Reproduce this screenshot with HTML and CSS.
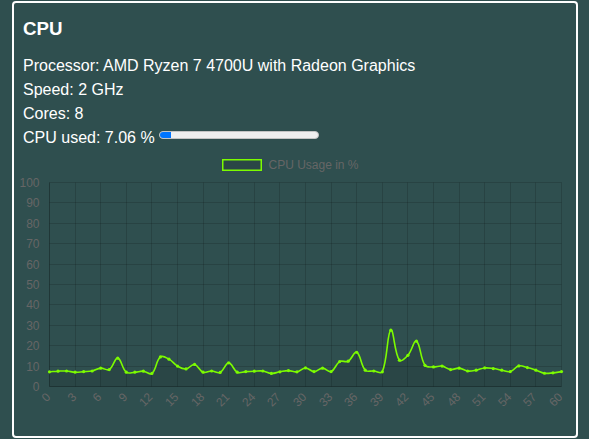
FILE: index.html
```html
<!DOCTYPE html>
<html lang="en">
<head>
<meta charset="utf-8">
<title>CPU</title>
<link rel="stylesheet" href="styles.css">
</head>
<body>
<div class="card">
  <div class="info">
    <h3 class="title">CPU</h3>
    <div class="row">Processor: AMD Ryzen 7 4700U with Radeon Graphics</div>
    <div class="row">Speed: 2 GHz</div>
    <div class="row">Cores: 8</div>
    <div class="row">CPU used: 7.06 %<span class="meter"><span class="meter-fill" style="width:7.06%"></span></span></div>
  </div>
  <svg class="chart" width="562" height="284" viewBox="0 0 562 284">
    <rect class="legend-box" x="208.75" y="9.75" width="38.5" height="10.5"/>
    <text class="legend-text" x="254.5" y="19.3">CPU Usage in %</text>
    <path class="grid" d="M35.5 32.5H547.5M35.5 52.5H547.5M35.5 73.5H547.5M35.5 93.5H547.5M35.5 114.5H547.5M35.5 134.5H547.5M35.5 154.5H547.5M35.5 175.5H547.5M35.5 195.5H547.5M35.5 216.5H547.5M61.5 32.5V236.5M86.5 32.5V236.5M112.5 32.5V236.5M137.5 32.5V236.5M163.5 32.5V236.5M189.5 32.5V236.5M214.5 32.5V236.5M240.5 32.5V236.5M265.5 32.5V236.5M291.5 32.5V236.5M317.5 32.5V236.5M342.5 32.5V236.5M368.5 32.5V236.5M393.5 32.5V236.5M419.5 32.5V236.5M445.5 32.5V236.5M470.5 32.5V236.5M496.5 32.5V236.5M521.5 32.5V236.5M547.5 32.5V236.5"/>
    <path class="axis" d="M35.5 32.5V236.5H547.5"/>
    <g class="y-ticks">
      <text x="25.5" y="36.5">100</text>
      <text x="25.5" y="56.5">90</text>
      <text x="25.5" y="77.5">80</text>
      <text x="25.5" y="97.5">70</text>
      <text x="25.5" y="118.5">60</text>
      <text x="25.5" y="138.5">50</text>
      <text x="25.5" y="158.5">40</text>
      <text x="25.5" y="179.5">30</text>
      <text x="25.5" y="199.5">20</text>
      <text x="25.5" y="220.5">10</text>
      <text x="25.5" y="240.5">0</text>
    </g>
    <g class="x-ticks">
      <text transform="translate(34.5 245) rotate(-45)">0</text>
      <text transform="translate(60.5 245) rotate(-45)">3</text>
      <text transform="translate(85.5 245) rotate(-45)">6</text>
      <text transform="translate(111.5 245) rotate(-45)">9</text>
      <text transform="translate(136.5 245) rotate(-45)">12</text>
      <text transform="translate(162.5 245) rotate(-45)">15</text>
      <text transform="translate(188.5 245) rotate(-45)">18</text>
      <text transform="translate(213.5 245) rotate(-45)">21</text>
      <text transform="translate(239.5 245) rotate(-45)">24</text>
      <text transform="translate(264.5 245) rotate(-45)">27</text>
      <text transform="translate(290.5 245) rotate(-45)">30</text>
      <text transform="translate(316.5 245) rotate(-45)">33</text>
      <text transform="translate(341.5 245) rotate(-45)">36</text>
      <text transform="translate(367.5 245) rotate(-45)">39</text>
      <text transform="translate(392.5 245) rotate(-45)">42</text>
      <text transform="translate(418.5 245) rotate(-45)">45</text>
      <text transform="translate(444.5 245) rotate(-45)">48</text>
      <text transform="translate(469.5 245) rotate(-45)">51</text>
      <text transform="translate(495.5 245) rotate(-45)">54</text>
      <text transform="translate(520.5 245) rotate(-45)">57</text>
      <text transform="translate(546.5 245) rotate(-45)">60</text>
    </g>
    <path id="area" class="area" d=""/>
    <path id="line" class="series" d=""/>
    <g id="points" class="points"></g>
  </svg>
</div>
<script src="script.js"></script>
</body>
</html>
```

FILE: styles.css
```css
html, body {
  margin: 0;
  background: #2f4f4f;
}

body {
  padding: 1px 0 0 12px;
  font-family: "Liberation Sans", Arial, sans-serif;
  color: #ffffff;
}

.card {
  box-sizing: border-box;
  width: 566px;
  height: 437px;
  border: 2px solid #ffffff;
  border-radius: 4px;
  background: #2f4f4f;
  overflow: hidden;
}

.info {
  padding: 15px 9px 0;
}

.title {
  margin: 0 0 14px;
  font-size: 18.72px;
  line-height: 22px;
  font-weight: bold;
}

.row {
  font-size: 16px;
  line-height: 24px;
}

.meter {
  display: inline-block;
  box-sizing: border-box;
  width: 160px;
  height: 8px;
  margin-left: 4px;
  vertical-align: 4.5px;
  background: #efefef;
  border: 1px solid #c4c4c4;
  border-radius: 4px;
  overflow: hidden;
}

.meter-fill {
  display: block;
  height: 100%;
  background: #0075ff;
}

.chart {
  display: block;
  font-family: "Liberation Sans", Arial, sans-serif;
}

.legend-box {
  fill: rgba(0, 0, 0, 0.1);
  stroke: #7cfc00;
  stroke-width: 1.5;
}

.legend-text {
  font-size: 12px;
  fill: #666666;
}

.grid {
  fill: none;
  stroke: rgba(0, 0, 0, 0.15);
  stroke-width: 1;
}

.axis {
  fill: none;
  stroke: rgba(0, 0, 0, 0.3);
  stroke-width: 1;
}

.y-ticks text {
  font-size: 12px;
  fill: #666666;
  text-anchor: end;
}

.x-ticks text {
  font-size: 12px;
  fill: #666666;
  text-anchor: end;
  dominant-baseline: central;
}

.area {
  fill: rgba(0, 0, 0, 0.1);
  stroke: none;
}

.series {
  fill: none;
  stroke: #7cfc00;
  stroke-width: 1.6;
  stroke-linejoin: round;
}

.points circle {
  fill: #7cfc00;
}
```

FILE: script.js
```js
(function () {
  var data = [7.2, 7.5, 7.6, 7.0, 7.3, 7.6, 9.0, 8.3, 13.9, 7.0, 7.0, 7.5, 6.4, 14.5, 13.4, 10.0, 8.6, 10.8, 7.0, 7.6, 6.9, 11.6, 7.0, 7.3, 7.5, 7.6, 6.4, 7.2, 7.8, 7.2, 9.1, 7.3, 9.0, 7.3, 12.2, 12.4, 16.8, 8.0, 7.6, 7.2, 27.6, 12.9, 15.3, 22.2, 10.4, 9.6, 10.0, 8.3, 9.0, 7.6, 8.0, 9.1, 8.8, 8.0, 7.3, 10.1, 9.3, 8.0, 6.5, 6.7, 7.3];
  var left = 35.5, right = 547.5, top = 32.5, bottom = 236.5;
  var step = (right - left) / (data.length - 1);
  var pts = data.map(function (v, i) {
    return { x: left + i * step, y: bottom - v * (bottom - top) / 100 };
  });
  var t = 0.4;
  function clamp(v, a, b) { return Math.min(Math.max(v, a), b); }
  var cps = pts.map(function (p, i) {
    var prev = pts[i - 1] || p, next = pts[i + 1] || p;
    var d01 = Math.hypot(p.x - prev.x, p.y - prev.y);
    var d12 = Math.hypot(next.x - p.x, next.y - p.y);
    var s01 = d01 / (d01 + d12), s12 = d12 / (d01 + d12);
    if (isNaN(s01)) s01 = 0;
    if (isNaN(s12)) s12 = 0;
    var fa = t * s01, fb = t * s12;
    return {
      px: clamp(p.x - fa * (next.x - prev.x), left, right),
      py: clamp(p.y - fa * (next.y - prev.y), top, bottom),
      nx: clamp(p.x + fb * (next.x - prev.x), left, right),
      ny: clamp(p.y + fb * (next.y - prev.y), top, bottom)
    };
  });
  function f(n) { return n.toFixed(2); }
  var d = 'M' + f(pts[0].x) + ' ' + f(pts[0].y);
  for (var i = 1; i < pts.length; i++) {
    d += ' C' + f(cps[i - 1].nx) + ' ' + f(cps[i - 1].ny) + ' ' + f(cps[i].px) + ' ' + f(cps[i].py) + ' ' + f(pts[i].x) + ' ' + f(pts[i].y);
  }
  document.getElementById('line').setAttribute('d', d);
  document.getElementById('area').setAttribute('d', d + ' L' + f(right) + ' ' + f(bottom) + ' L' + f(left) + ' ' + f(bottom) + ' Z');
  var g = document.getElementById('points');
  var ns = 'http://www.w3.org/2000/svg';
  pts.forEach(function (p) {
    var c = document.createElementNS(ns, 'circle');
    c.setAttribute('cx', f(p.x));
    c.setAttribute('cy', f(p.y));
    c.setAttribute('r', '1.6');
    g.appendChild(c);
  });
})();
```
